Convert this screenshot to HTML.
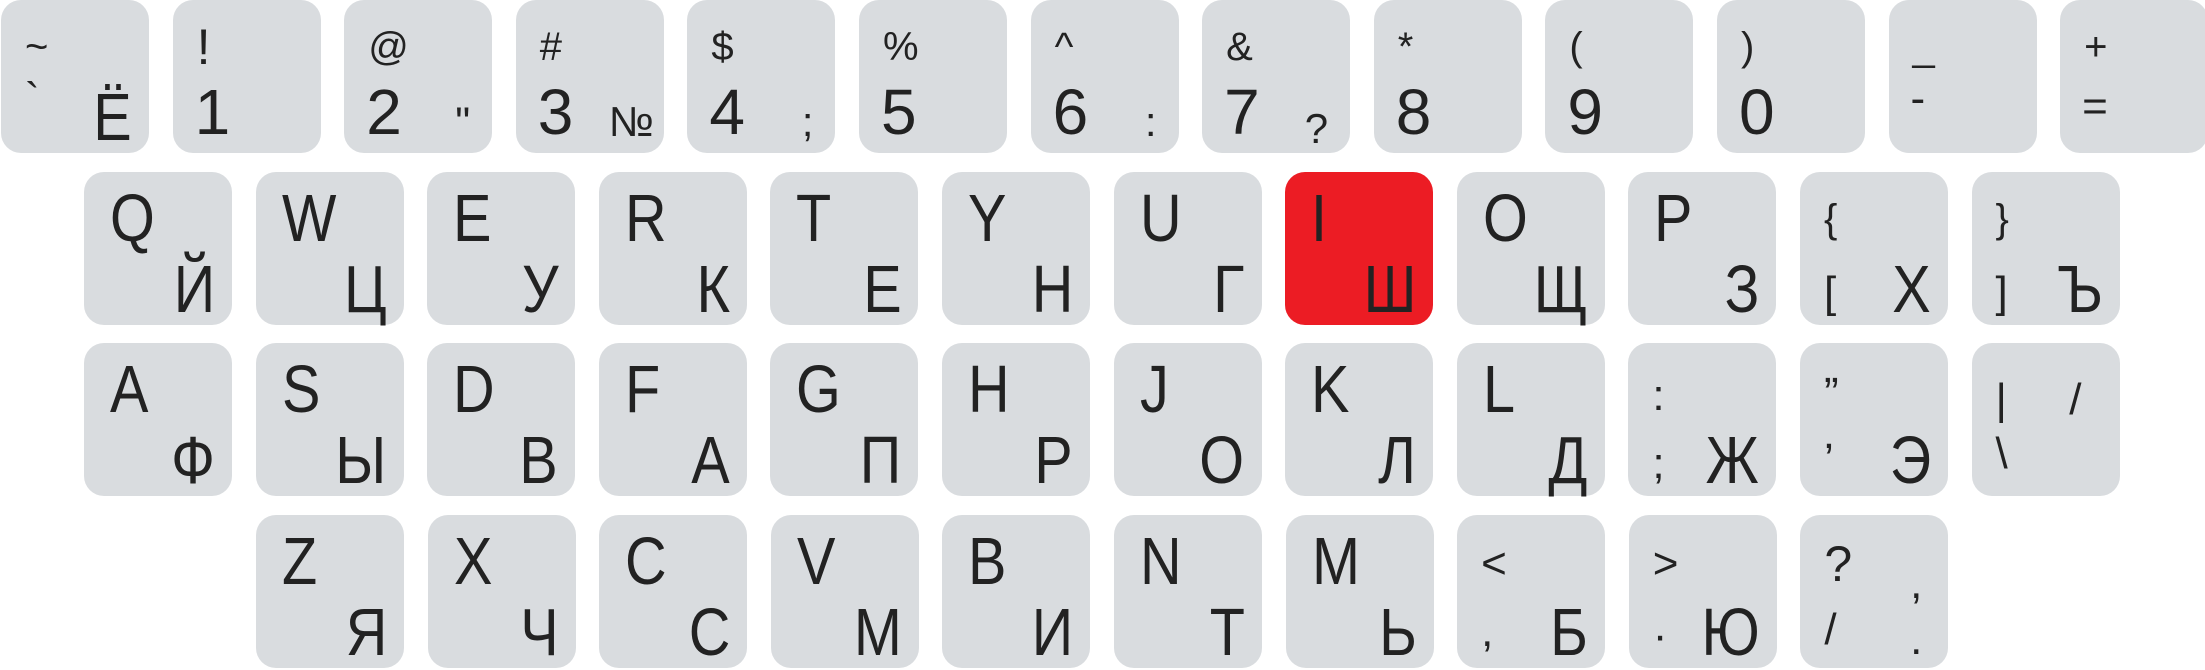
<!DOCTYPE html>
<html><head><meta charset="utf-8"><style>
body{margin:0;width:2205px;height:669px;background:#fff;overflow:hidden;font-family:"Liberation Sans",Arial,sans-serif;color:#222}
.row{position:absolute;display:flex;gap:23.6px}
.k{position:relative;width:148px;height:153px;background:#d9dcdf;border-radius:20px;flex:none}
.k.red{background:#ec1c24}
.k span{position:absolute;line-height:58px;font-size:58px;white-space:nowrap}
.k span.t,.k span.b{font-size:67px;line-height:67px;transform:scaleX(0.86)}
.t{left:26px;top:13px;transform-origin:left center}
.b{right:17px;top:84px;transform-origin:right center}
.bl{left:24px;top:89px}
.s{left:24px;top:18px;font-size:40px!important}
.n{left:22px;top:83px;font-size:64px!important}
.m{right:22px;top:93px;font-size:42px!important}
.p{font-size:44px!important}
</style></head><body>
<div class="row" style="left:1px;top:0">
<div class="k"><span class="s">~</span><span class="bl p" style="top:70px">`</span><span class="b">Ё</span></div>
<div class="k"><span class="s" style="font-size:50px!important">!</span><span class="n">1</span></div>
<div class="k"><span class="s">@</span><span class="n">2</span><span class="m">"</span></div>
<div class="k"><span class="s">#</span><span class="n">3</span><span class="m" style="right:10px">№</span></div>
<div class="k"><span class="s">$</span><span class="n">4</span><span class="m">;</span></div>
<div class="k"><span class="s">%</span><span class="n">5</span></div>
<div class="k"><span class="s">^</span><span class="n">6</span><span class="m">:</span></div>
<div class="k"><span class="s">&amp;</span><span class="n">7</span><span class="m" style="top:100px">?</span></div>
<div class="k"><span class="s">*</span><span class="n">8</span></div>
<div class="k"><span class="s">(</span><span class="n">9</span></div>
<div class="k"><span class="s">)</span><span class="n">0</span></div>
<div class="k"><span class="s">_</span><span class="n" style="font-size:44px!important;top:70px">-</span></div>
<div class="k"><span class="s">+</span><span class="n" style="font-size:44px!important;top:78px">=</span></div>
</div>
<div class="row" style="left:84px;top:172px">
<div class="k"><span class="t">Q</span><span class="b">Й</span></div>
<div class="k"><span class="t">W</span><span class="b">Ц</span></div>
<div class="k"><span class="t">E</span><span class="b">У</span></div>
<div class="k"><span class="t">R</span><span class="b">К</span></div>
<div class="k"><span class="t">T</span><span class="b">Е</span></div>
<div class="k"><span class="t">Y</span><span class="b">Н</span></div>
<div class="k"><span class="t">U</span><span class="b">Г</span></div>
<div class="k red"><span class="t">I</span><span class="b">Ш</span></div>
<div class="k"><span class="t">O</span><span class="b">Щ</span></div>
<div class="k"><span class="t">P</span><span class="b">З</span></div>
<div class="k"><span class="s">{</span><span class="bl p" style="top:92px">[</span><span class="b">Х</span></div>
<div class="k"><span class="s">}</span><span class="bl p" style="top:92px">]</span><span class="b">Ъ</span></div>
</div>
<div class="row" style="left:84px;top:343px">
<div class="k"><span class="t">A</span><span class="b">Ф</span></div>
<div class="k"><span class="t">S</span><span class="b">Ы</span></div>
<div class="k"><span class="t">D</span><span class="b">В</span></div>
<div class="k"><span class="t">F</span><span class="b">А</span></div>
<div class="k"><span class="t">G</span><span class="b">П</span></div>
<div class="k"><span class="t">H</span><span class="b">Р</span></div>
<div class="k"><span class="t">J</span><span class="b">О</span></div>
<div class="k"><span class="t">K</span><span class="b">Л</span></div>
<div class="k"><span class="t">L</span><span class="b">Д</span></div>
<div class="k"><span class="s p" style="top:24px">:</span><span class="bl p" style="top:92px">;</span><span class="b">Ж</span></div>
<div class="k"><span class="s p" style="top:22px">”</span><span class="bl p" style="top:88px">’</span><span class="b">Э</span></div>
<div class="k"><span class="s p" style="top:28px">|</span><span class="p" style="right:38px;top:28px">/</span><span class="bl p" style="top:82px">\</span></div>
</div>
<div class="row" style="left:256px;top:515px">
<div class="k"><span class="t">Z</span><span class="b">Я</span></div>
<div class="k"><span class="t">X</span><span class="b">Ч</span></div>
<div class="k"><span class="t">C</span><span class="b">С</span></div>
<div class="k"><span class="t">V</span><span class="b">М</span></div>
<div class="k"><span class="t">B</span><span class="b">И</span></div>
<div class="k"><span class="t">N</span><span class="b">Т</span></div>
<div class="k"><span class="t">M</span><span class="b">Ь</span></div>
<div class="k"><span class="s p" style="top:20px">&lt;</span><span class="bl p" style="top:88px">,</span><span class="b">Б</span></div>
<div class="k"><span class="s p" style="top:20px">&gt;</span><span class="bl p" style="top:92px">·</span><span class="b">Ю</span></div>
<div class="k"><span class="s p" style="top:20px;font-size:50px!important">?</span><span class="p" style="right:26px;top:40px">,</span><span class="bl p" style="top:86px">/</span><span class="p" style="right:26px;top:96px">.</span></div>
</div>
</body></html>
